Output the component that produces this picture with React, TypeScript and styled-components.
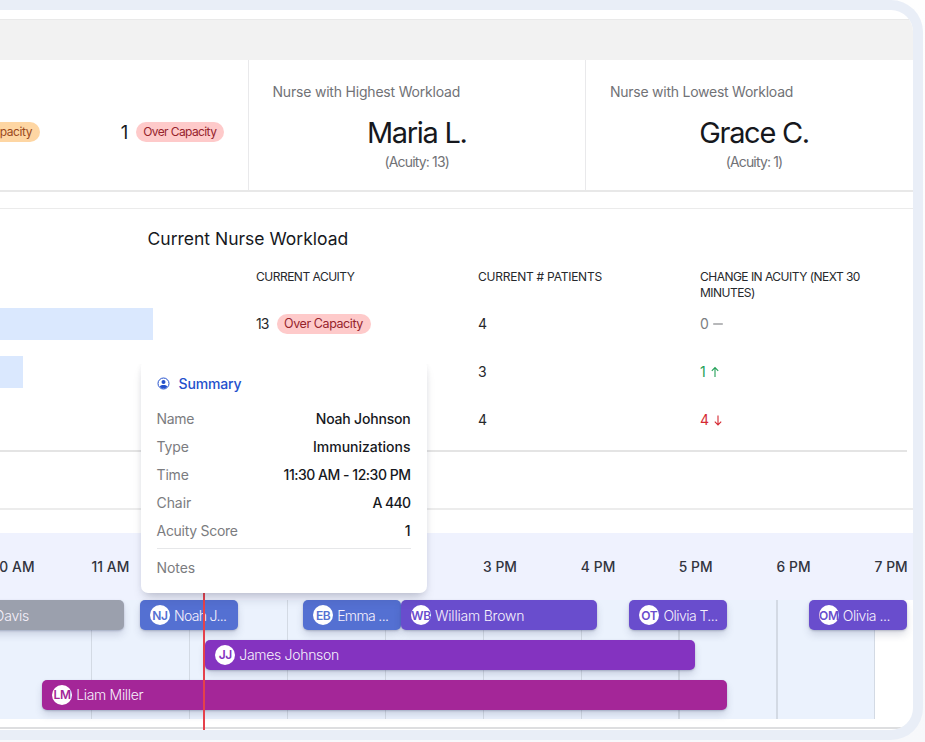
import React from "react";
import styled, { createGlobalStyle } from "styled-components";

const HOUR = 97.88;
const STEP = HOUR / 6;

const GlobalStyle = createGlobalStyle`
  * { box-sizing: border-box; }
  body {
    margin: 0;
    background: linear-gradient(180deg, #fefefe 0%, #f7f8fb 100%);
    font-family: Inter, "Noto Sans", sans-serif;
    color: #16181d;
    overflow: hidden;
  }
`;

const Frame = styled.div`
  width: 923px;
  height: 740px;
  border: 10px solid #e9eef7;
  border-left: 0;
  border-radius: 0 32px 32px 0;
  background: #fff;
  overflow: hidden;
  position: relative;
  display: flex;
  flex-direction: column;
`;

const Page = styled.div`
  min-height: 742px;
`;

const TopBar = styled.div`
  flex: none;
  height: 41px;
  margin-top: 9px;
  background: #f2f2f2;
  border-top: 1px solid #e9e9e9;
`;

const Stats = styled.section`
  flex: none;
  height: 132px;
  display: grid;
  grid-template-columns: 247.5px 337.5px 1fr;
  border-bottom: 2px solid #e8e8e8;
`;

const CapacityCell = styled.div`
  display: flex;
  align-items: center;
  padding-top: 13px;
`;

const Count = styled.span`
  font-size: 18.5px;
  margin: 0 8px 0 81px;
  width: 7px;
  display: flex;
  justify-content: center;
`;

const Pill = styled.span<{ $tone: "warn" | "over"; $width: number; $size: number; $ls: number }>`
  display: flex;
  align-items: center;
  justify-content: ${(p) => (p.$tone === "warn" ? "flex-end" : "center")};
  padding-right: ${(p) => (p.$tone === "warn" ? 8 : 0)}px;
  width: ${(p) => p.$width}px;
  height: 20px;
  border-radius: ${(p) => (p.$tone === "warn" ? "0 10px 10px 0" : "10px")};
  font-size: ${(p) => p.$size}px;
  letter-spacing: ${(p) => p.$ls}px;
  white-space: nowrap;
  background: ${(p) => (p.$tone === "warn" ? "#fed6a3" : "#fecaca")};
  color: ${(p) => (p.$tone === "warn" ? "#9a4a1c" : "#96232c")};
`;

const StatCell = styled.div<{ $inset?: number }>`
  border-left: 1px solid #e9e9eb;
  padding: 22px ${(p) => p.$inset ?? 24}px 0 24px;
  display: flex;
  flex-direction: column;
`;

const StatLabel = styled.div<{ $ls: number }>`
  font-size: 14px;
  line-height: 20px;
  letter-spacing: ${(p) => p.$ls}px;
  white-space: nowrap;
  color: #717276;
`;

const StatValue = styled.div`
  margin-top: 12px;
  text-align: center;
  font-size: 29px;
  line-height: 38px;
  letter-spacing: -1.29px;
`;

const StatNote = styled.div`
  text-align: center;
  font-size: 14px;
  line-height: 20px;
  letter-spacing: -0.84px;
  color: #717276;
`;

const Workload = styled.section`
  flex: none;
  margin-top: 16px;
  height: 302px;
  border-top: 1px solid #ebebeb;
  border-bottom: 2px solid #ececec;
`;

const Title = styled.h2`
  margin: 17px 0 0 147.5px;
  font-size: 17.5px;
  font-weight: 400;
  line-height: 26px;
`;

const Table = styled.div`
  margin: 17px 6px 0 0;
  height: 183px;
  border-bottom: 2px solid #e4e4e4;
`;

const TableRow = styled.div<{ $head?: boolean }>`
  display: grid;
  grid-template-columns: 256px 222px 222px 1fr;
  height: ${(p) => (p.$head ? 31.5 : 47.9)}px;
  align-items: ${(p) => (p.$head ? "start" : "center")};
  font-size: ${(p) => (p.$head ? 12 : 14)}px;
  line-height: 16px;
  color: #26282c;
`;

const HeadCell = styled.div<{ $ls: number }>`
  letter-spacing: ${(p) => p.$ls}px;
`;

const LoadBar = styled.div<{ $width: number }>`
  width: ${(p) => p.$width}px;
  height: 32px;
  background: #dae8fe;
`;

const AcuityCell = styled.div`
  display: flex;
  align-items: center;
  gap: 8px;
  letter-spacing: -0.9px;
`;

const Change = styled.div<{ $color: string }>`
  display: flex;
  align-items: center;
  gap: 3px;
  color: ${(p) => p.$color};
`;

const HourHeader = styled.div`
  flex: none;
  margin-top: 23px;
  height: 67px;
  padding-top: 25px;
  background: #eff2fe;
  display: flex;
`;

const Hour = styled.div<{ $first?: boolean }>`
  flex: none;
  width: ${HOUR}px;
  margin-left: ${(p) => (p.$first ? -6.5 : 0)}px;
  font-size: 13.8px;
  font-weight: 500;
  line-height: 19px;
  letter-spacing: 0.1px;
  white-space: nowrap;
  color: #32353e;
`;

const Lanes = styled.div`
  flex: none;
  width: 875px;
  height: 119px;
  display: flex;
  flex-direction: column;
  gap: 9.8px;
  background:
    repeating-linear-gradient(90deg, #d3dae4 0 1.3px, transparent 1.3px ${HOUR}px) -6.7px 0 / 1100px 100% no-repeat,
    #ebf2fd;
`;

const Lane = styled.div`
  flex: none;
  display: grid;
  grid-template-columns: repeat(64, ${STEP}px);
  margin-left: -104.7px;
  height: 30px;
`;

const Bar = styled.div<{ $from: number; $to: number; $color: string }>`
  grid-column: ${(p) => p.$from} / ${(p) => p.$to};
  display: flex;
  align-items: center;
  gap: 4px;
  min-width: 0;
  padding: 0 9px 0 10px;
  border-radius: 5px;
  background: ${(p) => p.$color};
  box-shadow: 0 5px 9px -1px rgba(50, 60, 100, 0.2), 0 1px 2px rgba(50, 60, 100, 0.25);
  color: #f7f2fc;
`;

const Avatar = styled.span<{ $color: string }>`
  flex: none;
  width: 20px;
  height: 20px;
  border-radius: 50%;
  background: #fff;
  color: ${(p) => p.$color};
  display: flex;
  align-items: center;
  justify-content: center;
  font-size: 12px;
  font-weight: 600;
  letter-spacing: -0.35px;
`;

const Patient = styled.span<{ $ls: number; $indent?: number }>`
  font-size: 14px;
  font-weight: 300;
  letter-spacing: ${(p) => p.$ls}px;
  margin-left: ${(p) => p.$indent ?? 0}px;
  white-space: nowrap;
`;

const FooterLine = styled.div`
  flex: none;
  margin-top: 8px;
  height: 1.5px;
  background: #dddee0;
`;

const NowLine = styled.div`
  position: absolute;
  left: 203.4px;
  top: 570px;
  bottom: 0;
  width: 2px;
  background: #e5414b;
`;

const Popover = styled.div`
  position: absolute;
  left: 140.5px;
  top: 350px;
  width: 286px;
  height: 232.5px;
  padding: 13px 16px 0;
  border-radius: 7px;
  background: #fff;
  box-shadow: 0 8px 12px -4px rgba(40, 45, 70, 0.22), 0 2px 7px -2px rgba(40, 45, 70, 0.12);
  clip-path: inset(4px -20px -24px -20px);
`;

const PopTitle = styled.div`
  display: flex;
  align-items: center;
  gap: 9px;
  height: 20px;
  margin-bottom: 12px;
  font-size: 14px;
  font-weight: 500;
  letter-spacing: -0.15px;
  color: #2450cc;
`;

const Field = styled.div`
  display: flex;
  justify-content: space-between;
  align-items: center;
  height: 27.8px;
  font-size: 14px;
`;

const FieldLabel = styled.span<{ $ls: number }>`
  color: #7b7c80;
  letter-spacing: ${(p) => p.$ls}px;
`;

const FieldValue = styled.span<{ $ls: number }>`
  font-weight: 500;
  letter-spacing: ${(p) => p.$ls}px;
`;

const Divider = styled.div`
  height: 1px;
  margin: 4px 0 5px;
  background: #e6e7e9;
`;

const UserIcon = () => (
  <svg width="13" height="13" viewBox="0 0 13 13" fill="none">
    <circle cx="6.5" cy="6.5" r="5.5" stroke="#2450cc" strokeWidth="1" />
    <circle cx="6.5" cy="5" r="2" fill="#2450cc" />
    <path d="M2.8 9.4C4 7.6 9 7.6 10.2 9.4 9.3 10.8 8 11.4 6.5 11.4S3.7 10.8 2.8 9.4Z" fill="#2450cc" />
  </svg>
);

const icons = {
  flat: "M1.2 6H10.8",
  up: "M6 11V1.8M2.8 4.8 6 1.6 9.2 4.8",
  down: "M6 1.5V10.7M2.8 7.7 6 10.9 9.2 7.7",
};

const TrendIcon = ({ kind }: { kind: keyof typeof icons }) => (
  <svg width="12" height="12" viewBox="0 0 12 12" fill="none" stroke="currentColor" strokeWidth="1.1">
    <path d={icons[kind]} />
  </svg>
);

const rows: { bar: number; over?: boolean; patients: number; change: number; kind: keyof typeof icons; color: string }[] = [
  { bar: 153, over: true, patients: 4, change: 0, kind: "flat", color: "#7c7e82" },
  { bar: 23, patients: 3, change: 1, kind: "up", color: "#23a158" },
  { bar: 0, patients: 4, change: 4, kind: "down", color: "#d52a33" },
];

const hours = ["10 AM", "11 AM", "", "", "", "3 PM", "4 PM", "5 PM", "6 PM", "7 PM"];

type Visit = { from: number; to: number; color: string; initials?: string; name: string; ls: number; indent?: number };

const BLUE = "#5470d2";
const INDIGO = "#694dcd";

const lanes: Visit[][] = [
  [
    { from: 1, to: 15, color: "#9ba0ad", name: "Davis", ls: -0.2, indent: 89 },
    { from: 16, to: 22, color: BLUE, initials: "NJ", name: "Noah J...", ls: -0.67 },
    { from: 26, to: 32, color: BLUE, initials: "EB", name: "Emma ...", ls: -0.63 },
    { from: 32, to: 44, color: INDIGO, initials: "WB", name: "William Brown", ls: -0.22 },
    { from: 46, to: 52, color: INDIGO, initials: "OT", name: "Olivia T...", ls: -0.54 },
    { from: 57, to: 63, color: INDIGO, initials: "OM", name: "Olivia ...", ls: -0.45 },
  ],
  [{ from: 20, to: 50, color: "#8433c0", initials: "JJ", name: "James Johnson", ls: -0.3 }],
  [{ from: 10, to: 52, color: "#a42698", initials: "LM", name: "Liam Miller", ls: -0.31 }],
];

const fields: [string, number, string, number][] = [
  ["Name", -0.29, "Noah Johnson", -0.2],
  ["Type", -0.14, "Immunizations", 0],
  ["Time", -0.16, "11:30 AM - 12:30 PM", -0.48],
  ["Chair", -0.07, "A 440", -0.62],
  ["Acuity Score", -0.28, "1", 0],
];

export default function App() {
  return (
    <Page>
      <GlobalStyle />
      <Frame>
        <TopBar />
        <Stats>
          <CapacityCell>
            <Pill $tone="warn" $width={40} $size={12} $ls={-0.45}>apacity</Pill>
            <Count>1</Count>
            <Pill $tone="over" $width={87.5} $size={12} $ls={-0.6}>Over Capacity</Pill>
          </CapacityCell>
          <StatCell>
            <StatLabel $ls={-0.2}>Nurse with Highest Workload</StatLabel>
            <StatValue>Maria L.</StatValue>
            <StatNote>(Acuity: 13)</StatNote>
          </StatCell>
          <StatCell $inset={15}>
            <StatLabel $ls={-0.25}>Nurse with Lowest Workload</StatLabel>
            <StatValue>Grace C.</StatValue>
            <StatNote>(Acuity: 1)</StatNote>
          </StatCell>
        </Stats>

        <Workload>
          <Title>Current Nurse Workload</Title>
          <Table>
            <TableRow $head>
              <span />
              <HeadCell $ls={-0.5}>CURRENT ACUITY</HeadCell>
              <HeadCell $ls={-0.24}>CURRENT # PATIENTS</HeadCell>
              <HeadCell $ls={-0.52}>
                CHANGE IN ACUITY (NEXT 30
                <br />
                MINUTES)
              </HeadCell>
            </TableRow>
            {rows.map((r, i) => (
              <TableRow key={i}>
                <LoadBar $width={r.bar} />
                <AcuityCell>
                  {r.over && (
                    <>
                      <span>13</span>
                      <Pill $tone="over" $width={94} $size={12.5} $ls={-0.42}>Over Capacity</Pill>
                    </>
                  )}
                </AcuityCell>
                <span>{r.patients}</span>
                <Change $color={r.color}>
                  {r.change}
                  <TrendIcon kind={r.kind} />
                </Change>
              </TableRow>
            ))}
          </Table>
        </Workload>

        <HourHeader>
          {hours.map((h, i) => (
            <Hour key={i} $first={i === 0}>{h}</Hour>
          ))}
        </HourHeader>
        <Lanes>
          {lanes.map((lane, i) => (
            <Lane key={i}>
              {lane.map((v) => (
                <Bar key={v.name} $from={v.from} $to={v.to} $color={v.color}>
                  {v.initials && <Avatar $color={v.color}>{v.initials}</Avatar>}
                  <Patient $ls={v.ls} $indent={v.indent}>{v.name}</Patient>
                </Bar>
              ))}
            </Lane>
          ))}
        </Lanes>
        <FooterLine />

        <NowLine />
        <Popover>
          <PopTitle>
            <UserIcon />
            Summary
          </PopTitle>
          {fields.map(([label, lls, value, vls]) => (
            <Field key={label}>
              <FieldLabel $ls={lls}>{label}</FieldLabel>
              <FieldValue $ls={vls}>{value}</FieldValue>
            </Field>
          ))}
          <Divider />
          <Field>
            <FieldLabel $ls={-0.05}>Notes</FieldLabel>
          </Field>
        </Popover>
      </Frame>
    </Page>
  );
}
